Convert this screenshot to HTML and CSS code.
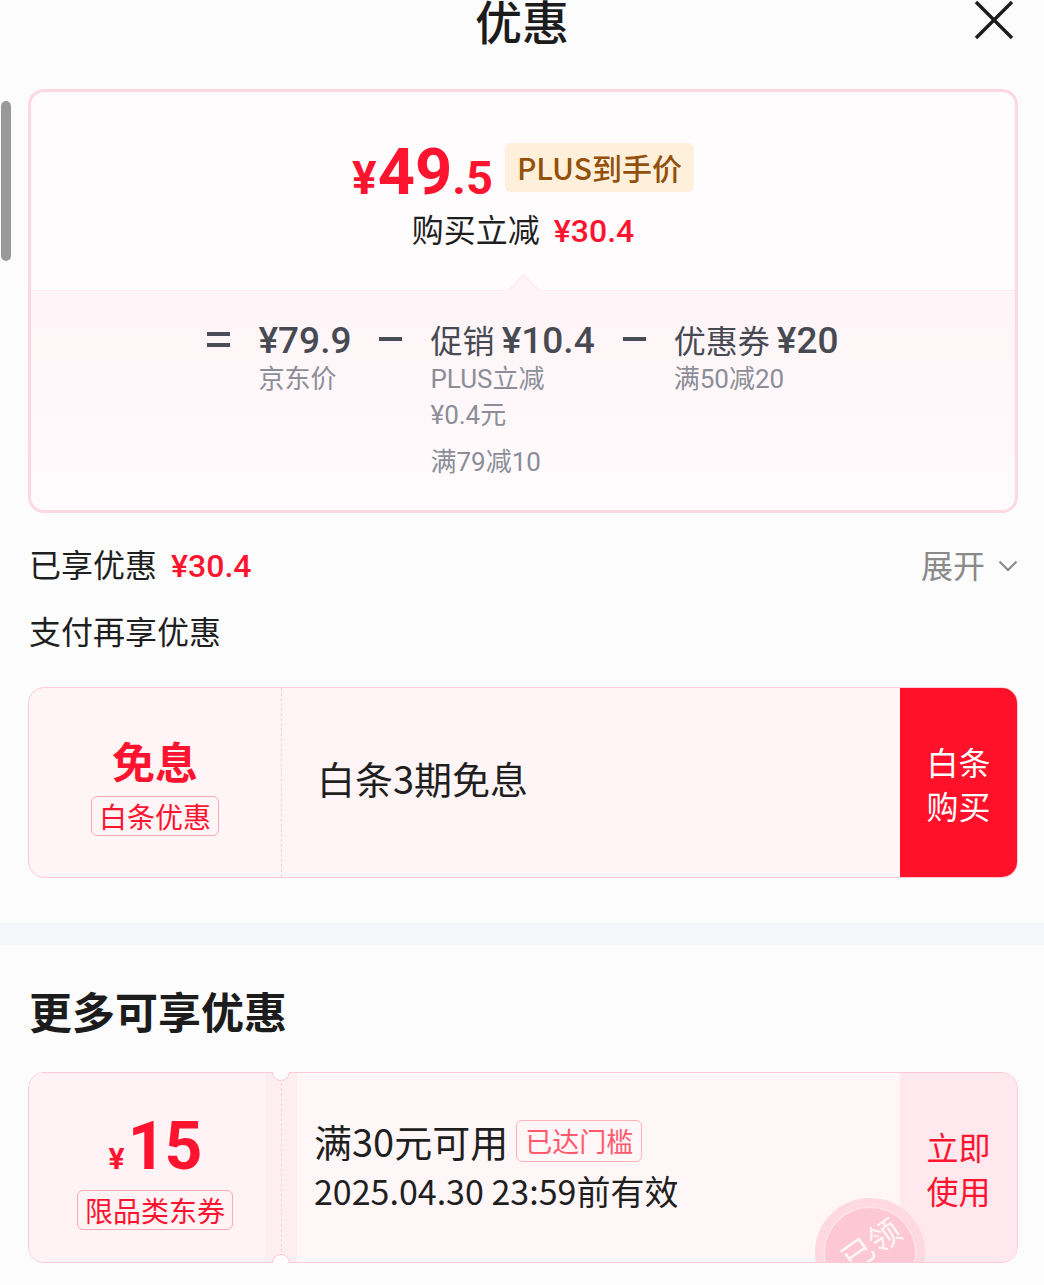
FILE: index.html
```html
<!DOCTYPE html>
<html lang="zh-CN">
<head>
<meta charset="utf-8">
<title>优惠</title>
<link rel="stylesheet" href="styles.css">
</head>
<body>
<div class="scrollbar"></div>
<header class="header">
  <span></span>
  <h1 class="title">优惠</h1>
  <svg class="close" width="40" height="40" viewBox="0 0 40 40"><path d="M2 2 L38 38 M38 2 L2 38" stroke="#1c1c1c" stroke-width="3.4" fill="none"/></svg>
</header>

<section class="price-card">
  <div class="price-top">
    <div class="price-row">
      <span class="price"><span class="yen">¥</span><span class="int">49</span><span class="dec">.5</span></span>
      <span class="plus-badge">PLUS到手价</span>
    </div>
    <div class="reduce"><span>购买立减</span><span class="reduce-amt">¥30.4</span></div>
  </div>
  <div class="price-bottom">
    <div class="formula">
      <span class="op op-eq"><i></i><i></i></span>
      <div class="term">
        <div class="term-main"><span class="num">¥79.9</span></div>
        <div class="term-sub">京东价</div>
      </div>
      <span class="op op-minus"><i></i></span>
      <div class="term">
        <div class="term-main">促销 <span class="num">¥10.4</span></div>
        <div class="term-sub">PLUS立减<br>¥0.4元</div>
        <div class="term-sub term-gap">满79减10</div>
      </div>
      <span class="op op-minus"><i></i></span>
      <div class="term">
        <div class="term-main">优惠券 <span class="num">¥20</span></div>
        <div class="term-sub">满50减20</div>
      </div>
    </div>
  </div>
</section>

<div class="enjoyed">
  <span class="enjoyed-label"><span>已享优惠</span><span class="enjoyed-amt">¥30.4</span></span>
  <span class="expand">展开<svg class="chev" width="20" height="12" viewBox="0 0 20 12"><path d="M1.5 1.5 L10 10 L18.5 1.5" stroke="#8a8a8a" stroke-width="2.2" fill="none"/></svg></span>
</div>
<div class="section-label">支付再享优惠</div>

<div class="bt-card">
  <div class="bt-left">
    <div class="bt-title">免息</div>
    <div class="tag">白条优惠</div>
  </div>
  <div class="bt-mid">白条3期免息</div>
  <div class="bt-btn">白条<br>购买</div>
</div>

<div class="band"></div>

<h2 class="more-title">更多可享优惠</h2>

<div class="coupon">
  <div class="cp-left">
    <div class="cp-amount"><span class="cp-yen">¥</span><span class="cp-num">15</span></div>
    <div class="tag">限品类东券</div>
  </div>
  <div class="cp-mid">
    <div class="cp-cond">满30元可用<span class="cp-reached">已达门槛</span></div>
    <div class="cp-date">2025.04.30 23:59前有效</div>
  </div>
  <div class="cp-btn">立即<br>使用</div>
  <span class="notch notch-top"></span>
  <span class="notch notch-bottom"></span>
  <div class="stamp"><span>已领</span></div>
</div>
</body>
</html>
```
FILE: styles.css
```css
* { box-sizing: border-box; }
html, body { margin: 0; padding: 0; }
body {
  width: 1044px;
  height: 1285px;
  overflow: hidden;
  background: #fcfcfc;
  font-family: "Noto Sans CJK SC", "Noto Sans", sans-serif;
  color: #1f1f1f;
  position: relative;
}
.scrollbar {
  position: absolute;
  left: 1px;
  top: 101px;
  width: 10px;
  height: 160px;
  border-radius: 5px;
  background: #999;
}
.header {
  height: 89px;
  display: grid;
  grid-template-columns: 1fr auto 1fr;
}
.title {
  margin: -3px 0 0;
  font-size: 47px;
  line-height: 46px;
  font-weight: 500;
  color: #1c1c1c;
}
.close {
  justify-self: end;
  margin-right: 30px;
}

/* price card */
.price-card {
  margin: 0 26px 0 28px;
  border: 3px solid #ffd7e1;
  border-radius: 16px;
  overflow: hidden;
  background: #fefcfd;
}
.price-top {
  padding: 48px 0 42px;
}
.price-row {
  display: flex;
  justify-content: center;
  align-items: flex-start;
  height: 64px;
}
.price {
  display: flex;
  align-items: baseline;
  height: 64px;
  font-family: "Roboto", sans-serif;
  font-weight: 700;
  color: #ff1430;
  line-height: 64px;
  white-space: nowrap;
}
.price .yen { font-size: 46px; margin-right: 1px; }
.price .int { font-size: 65px; }
.price .dec { font-size: 47px; }
.plus-badge {
  margin-left: 12px;
  margin-top: 3px;
  height: 49px;
  padding: 0 12px;
  border-radius: 6px;
  background: #fff0dc;
  color: #93500a;
  font-size: 30px;
  line-height: 49px;
  font-weight: 500;
}
.reduce {
  margin-top: 4px;
  height: 40px;
  display: flex;
  justify-content: center;
  align-items: baseline;
  font-size: 32px;
  line-height: 40px;
  color: #1f1f1f;
}
.reduce-amt {
  margin-left: 14px;
  font-family: "Roboto", sans-serif;
  font-weight: 500;
  font-size: 32px;
  color: #ff1430;
}
.price-bottom {
  position: relative;
  border-top: 1px solid #ffeaf0;
  background: linear-gradient(#fff4f7, #fffbfc);
  padding: 26px 0 30px;
}
.price-bottom::before {
  content: "";
  position: absolute;
  left: 50%;
  top: -12px;
  width: 22px;
  height: 22px;
  margin-left: -11px;
  background: #fff4f7;
  border-top: 1px solid #ffe3ea;
  border-left: 1px solid #ffe3ea;
  transform: rotate(45deg);
}
.formula {
  display: flex;
  justify-content: center;
  align-items: flex-start;
  gap: 28px;
}
.op {
  width: 23px;
  height: 44px;
  display: flex;
  flex-direction: column;
  justify-content: center;
  align-items: center;
  gap: 7px;
}
.op i {
  display: block;
  width: 23px;
  height: 4px;
  background: #4a4d55;
}
.term-main {
  height: 44px;
  font-size: 32px;
  line-height: 44px;
  color: #474a53;
  white-space: nowrap;
}
.num {
  font-family: "Roboto", sans-serif;
  font-weight: 500;
  font-size: 37px;
}
.term-sub {
  font-family: "Roboto", "Noto Sans CJK SC", sans-serif;
  font-size: 26px;
  line-height: 36px;
  color: #8b8e98;
  white-space: nowrap;
}
.term-gap { margin-top: 11px; }

/* enjoyed */
.enjoyed {
  margin: 29px 26px 0 29px;
  display: flex;
  justify-content: space-between;
  align-items: center;
  height: 44px;
  font-size: 32px;
  line-height: 44px;
}
.enjoyed-label {
  display: flex;
  align-items: baseline;
}
.enjoyed-amt {
  margin-left: 14px;
  font-family: "Roboto", sans-serif;
  font-weight: 500;
  font-size: 32px;
  color: #ff1430;
}
.expand {
  color: #8a8a8a;
  display: flex;
  align-items: center;
}
.chev { margin-left: 13px; margin-top: 4px; }
.section-label {
  margin: 22px 0 0 29px;
  font-size: 32px;
  line-height: 44px;
}

/* baitiao card */
.bt-card {
  margin: 35px 26px 0 28px;
  height: 191px;
  border: 1px solid #ffcad6;
  border-radius: 16px;
  background: #fff5f7;
  display: flex;
  overflow: hidden;
}
.bt-left {
  width: 253px;
  border-right: 1px dashed #ffcdd8;
  display: flex;
  flex-direction: column;
  align-items: center;
  padding-top: 47px;
}
.bt-title {
  font-size: 43px;
  line-height: 50px;
  font-weight: 700;
  color: #ff1430;
}
.tag {
  margin-top: 11px;
  height: 40px;
  padding: 0 7px;
  border: 1px solid #ffa7b8;
  border-radius: 6px;
  font-size: 28px;
  line-height: 38px;
  color: #ff1430;
  white-space: nowrap;
}
.bt-mid {
  flex: 1;
  display: flex;
  align-items: center;
  padding: 0 0 10px 35px;
  font-size: 38px;
  color: #1f1f1f;
}
.bt-btn {
  width: 117px;
  background: #ff1229;
  color: #fff;
  font-size: 32px;
  line-height: 44px;
  display: flex;
  align-items: center;
  justify-content: center;
  text-align: center;
}

.band {
  margin-top: 45px;
  height: 22px;
  background: #f6f7fb;
}
.more-title {
  margin: 37px 0 0 29px;
  font-size: 43px;
  line-height: 56px;
  font-weight: 700;
  color: #1c1c1c;
}

/* coupon */
.coupon {
  position: relative;
  margin: 34px 26px 0 28px;
  height: 191px;
  border: 1px solid #ffcad6;
  border-radius: 16px;
  display: flex;
}
.cp-left {
  width: 253px;
  border-right: 1px dashed #ffcdd8;
  border-radius: 15px 0 0 15px;
  background: linear-gradient(to right, #fff3f6 236px, #fdeef2 236px);
  display: flex;
  flex-direction: column;
  align-items: center;
  padding-top: 41px;
}
.cp-amount {
  display: flex;
  align-items: baseline;
  height: 66px;
  font-family: "Roboto", sans-serif;
  font-weight: 700;
  color: #ff1430;
  line-height: 66px;
  white-space: nowrap;
}
.cp-yen { font-size: 30px; margin-right: 3px; }
.cp-num { font-size: 66px; letter-spacing: -1px; }
.cp-left .tag { margin-top: 10px; }
.cp-mid {
  flex: 1;
  background: linear-gradient(to right, #fdeef2 15px, #fff6f8 15px);
  padding: 43px 0 0 32px;
}
.cp-cond {
  font-size: 38px;
  line-height: 50px;
  height: 50px;
  color: #1f1f1f;
  display: flex;
  align-items: center;
}
.cp-reached {
  margin-left: 8px;
  height: 42px;
  padding: 0 8px;
  border: 1px solid #ffb0bd;
  border-radius: 6px;
  font-size: 27px;
  line-height: 40px;
  color: #ff5a6e;
}
.cp-date {
  font-size: 34px;
  line-height: 42px;
  color: #1f1f1f;
  margin-top: 4px;
}
.cp-btn {
  width: 117px;
  border-radius: 0 15px 15px 0;
  background: #ffe9ef;
  color: #ff1430;
  font-size: 32px;
  line-height: 44px;
  display: flex;
  align-items: center;
  justify-content: center;
  text-align: center;
}
.notch {
  position: absolute;
  left: 243px;
  width: 18px;
  height: 18px;
  border: 1px solid #ffc6d2;
  border-radius: 50%;
  background: #fcfcfc;
}
.notch-top { top: -10px; clip-path: inset(9px 0 0 0); }
.notch-bottom { top: 181px; clip-path: inset(0 0 9px 0); }
.stamp {
  position: absolute;
  left: 786px;
  top: 125px;
  width: 110px;
  height: 110px;
  border-radius: 50%;
  border: 8px solid #ffd9e1;
  background: #fdc8d3;
  box-shadow: inset 0 0 0 2px #ffe3e9;
  clip-path: inset(0 0 46px 0);
  display: flex;
  align-items: center;
  justify-content: center;
  padding-bottom: 20px;
}
.stamp span {
  font-size: 32px;
  line-height: 36px;
  color: rgba(255, 255, 255, 0.85);
  transform: rotate(-35deg);
}
```
